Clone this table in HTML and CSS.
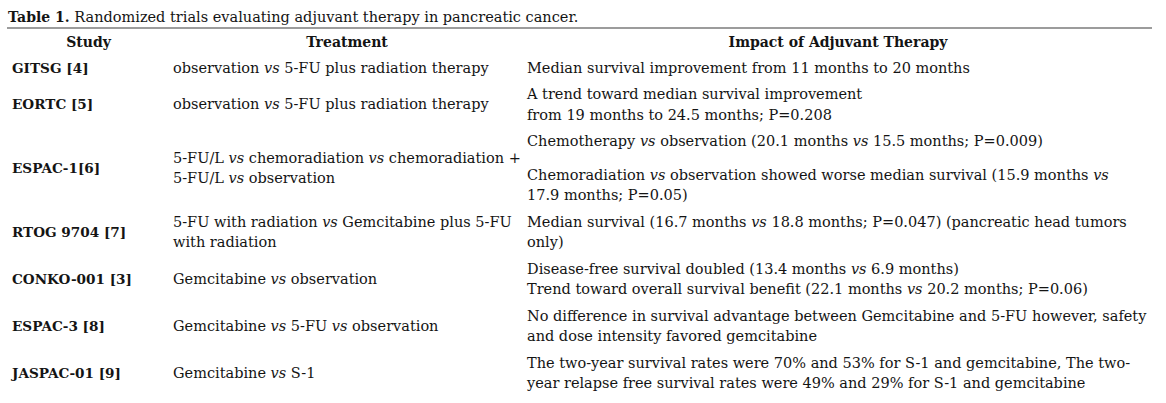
FILE: index.html
```html
<!DOCTYPE html>
<html lang="en">
<head>
<meta charset="utf-8">
<title>Table 1</title>
<link rel="stylesheet" href="styles.css">
</head>
<body>
<div class="page">
  <p class="caption"><b>Table 1.</b> Randomized trials evaluating adjuvant therapy in pancreatic cancer.</p>
  <table class="trials">
    <colgroup>
      <col class="c-study">
      <col class="c-treat">
      <col class="c-impact">
    </colgroup>
    <thead>
      <tr><th>Study</th><th>Treatment</th><th>Impact of Adjuvant Therapy</th></tr>
    </thead>
    <tbody>
      <tr>
        <td class="study">GITSG [4]</td>
        <td>observation <i>vs</i> 5-FU plus radiation therapy</td>
        <td>Median survival improvement from 11 months to 20 months</td>
      </tr>
      <tr>
        <td class="study">EORTC [5]</td>
        <td>observation <i>vs</i> 5-FU plus radiation therapy</td>
        <td>A trend toward median survival improvement<br>from 19 months to 24.5 months; P=0.208</td>
      </tr>
      <tr>
        <td class="study">ESPAC-1[6]</td>
        <td>5-FU/L <i>vs</i> chemoradiation <i>vs</i> chemoradiation +<br>5-FU/L <i>vs</i> observation</td>
        <td>
          <div class="para">Chemotherapy <i>vs</i> observation (20.1 months <i>vs</i> 15.5 months; P=0.009)</div>
          <div class="para gap">Chemoradiation <i>vs</i> observation showed worse median survival (15.9 months <i>vs</i><br>17.9 months; P=0.05)</div>
        </td>
      </tr>
      <tr>
        <td class="study">RTOG 9704 [7]</td>
        <td>5-FU with radiation <i>vs</i> Gemcitabine plus 5-FU<br>with radiation</td>
        <td>Median survival (16.7 months <i>vs</i> 18.8 months; P=0.047) (pancreatic head tumors<br>only)</td>
      </tr>
      <tr>
        <td class="study">CONKO-001 [3]</td>
        <td>Gemcitabine <i>vs</i> observation</td>
        <td>Disease-free survival doubled (13.4 months <i>vs</i> 6.9 months)<br>Trend toward overall survival benefit (22.1 months <i>vs</i> 20.2 months; P=0.06)</td>
      </tr>
      <tr>
        <td class="study">ESPAC-3 [8]</td>
        <td>Gemcitabine <i>vs</i> 5-FU <i>vs</i> observation</td>
        <td>No difference in survival advantage between Gemcitabine and 5-FU however, safety<br>and dose intensity favored gemcitabine</td>
      </tr>
      <tr>
        <td class="study">JASPAC-01 [9]</td>
        <td>Gemcitabine <i>vs</i> S-1</td>
        <td>The two-year survival rates were 70% and 53% for S-1 and gemcitabine, The two-<br>year relapse free survival rates were 49% and 29% for S-1 and gemcitabine</td>
      </tr>
    </tbody>
  </table>
</div>
</body>
</html>
```

FILE: styles.css
```css
html, body {
  margin: 0;
  padding: 0;
  background: #ffffff;
}

body {
  font-family: "DejaVu Serif", "Liberation Serif", serif;
  color: #141414;
}

.page {
  padding: 8px 14px 8px 7px;
}

.caption {
  margin: 0 0 1px 1px;
  font-size: 14.5px;
  line-height: 18px;
  white-space: nowrap;
}

.caption b {
  font-size: 14px;
}

.trials {
  width: 1145px;
  border-collapse: collapse;
  border-top: 2px solid #9c9c9c;
  font-size: 14.5px;
  line-height: 20.5px;
}

.c-study { width: 163px; }
.c-treat { width: 354px; }
.c-impact { width: 628px; }

.trials th {
  font-size: 14px;
  font-weight: bold;
  text-align: center;
  padding: 3px 4px 2px;
  white-space: nowrap;
}

.trials td {
  padding: 3px 3px;
  vertical-align: middle;
  white-space: nowrap;
}

.trials td.study {
  font-size: 13.6px;
  font-weight: bold;
  padding-left: 5px;
}

.para.gap {
  margin-top: 13px;
}
```
